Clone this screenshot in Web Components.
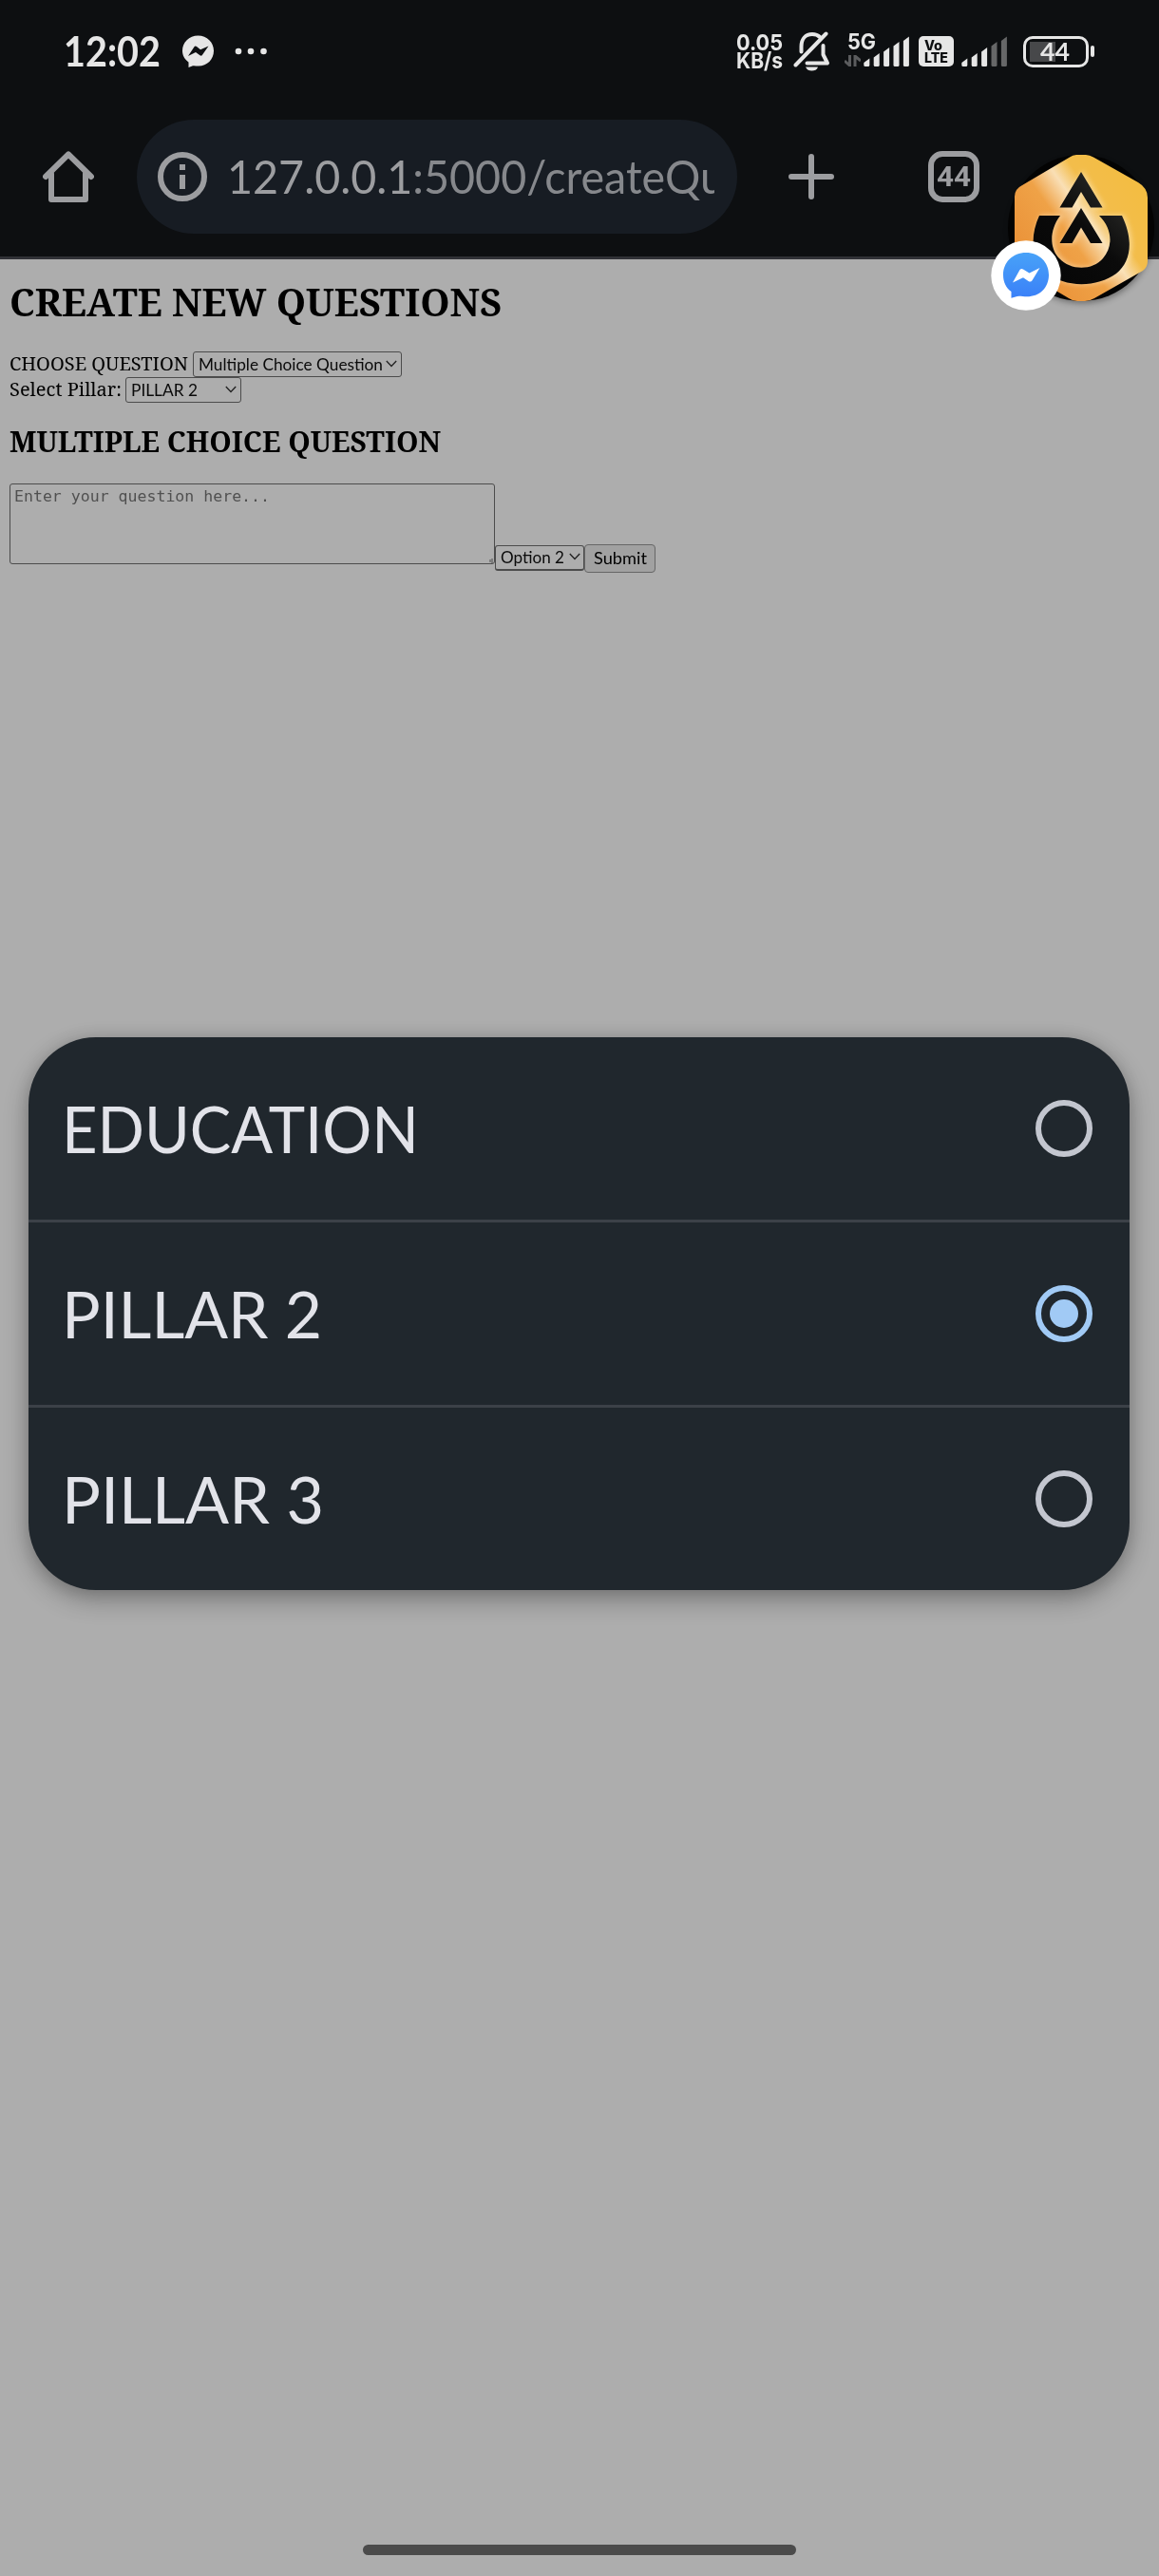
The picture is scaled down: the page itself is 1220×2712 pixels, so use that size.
<!DOCTYPE html>
<html lang="en">
<head>
<meta charset="utf-8">
<title>Create new questions</title>
<style>
html,body{margin:0;padding:0;background:#adadad}
body{width:1220px;height:2712px;overflow:hidden}
</style>
</head>
<body>
<phone-screen></phone-screen>
<script>
const define = (name, html, setup) => customElements.define(name, class extends HTMLElement {
  connectedCallback() {
    if (this.shadowRoot) return;
    this.attachShadow({ mode: 'open' }).innerHTML = html;
    if (setup) setup(this, this.shadowRoot);
  }
});

/* One line of text stretched to the width given by the "w" attribute. */
define('fit-text', `<style>
:host{display:inline-block;white-space:nowrap;flex:none;text-align:left}
span{display:inline-block;transform-origin:0 50%}
</style><span><slot></slot></span>`, (el, root) => {
  const span = root.querySelector('span');
  const w = +el.getAttribute('w');
  el.style.width = w + 'px';
  const fit = () => {
    const n = span.offsetWidth && span.getBoundingClientRect().width;
    if (n) span.style.transform = `scaleX(${w / n})`;
  };
  fit();
});

define('signal-bars', `<style>:host{display:block;width:50px;height:33px}svg{display:block}</style>
<svg width="50" height="33" viewBox="0 0 50 33" fill="#e6e6e6"></svg>`, (el, root) => {
  const lit = +el.getAttribute('lit');
  const tops = [23.5, 18, 12, 6, 0.5];
  root.querySelector('svg').innerHTML = tops.map((t, i) => {
    const x = i * 10.4 + 0.3;
    return `<path d="M${x} ${t + 4.5}L${x + 6} ${t}V30.5Q${x + 6} 32 ${x + 4.5} 32H${x + 1.5}Q${x} 32 ${x} 30.5Z" fill="${i < lit ? '#e6e6e6' : '#666768'}"/>`;
  }).join('');
});

define('status-bar', `<style>
:host{display:flex;height:108px;box-sizing:border-box;padding:0 68px 0 67px;justify-content:space-between;align-items:center;color:#e6e6e6;font-family:Lato,"Open Sans",sans-serif}
.l,.r{display:flex;align-items:center;height:34px}
svg{display:block;flex:none}
.time{font-size:43px;font-weight:700;line-height:34px}
.net{width:49px;font:700 23.500px/19px Inter,sans-serif;display:flex;flex-direction:column}
.sig{display:flex;position:relative;margin-left:14px;width:63px;padding-left:20px;height:34px;align-items:flex-end;box-sizing:content-box}
.g{position:absolute;left:3px;top:-2px;font:700 23px/18px Inter,sans-serif}
.ar{position:absolute;left:0;top:21px}
.vo{margin-left:-5px;width:37px;height:32px;border-radius:5px;background:#e6e6e6;color:#0d0f11;font:800 14px/13px Inter,sans-serif;display:flex;flex-direction:column;align-items:flex-start;padding:3px 6px;box-sizing:border-box}
.bat{margin-left:15px;width:69px;height:33px;box-sizing:border-box;border:3px solid #e6e6e6;border-radius:10px;padding:3px 4px;display:flex;align-items:center;background:linear-gradient(#47484a,#47484a) 4px 3px/27px 21px no-repeat}
.bat fit-text{margin-left:11px;font:700 26px/21px Lato,sans-serif}
.nub{margin-left:2px;width:4px;height:12px;border-radius:2px;background:#e6e6e6}
</style>
<div class="l"><fit-text class="time" w="102">12:02</fit-text>
<svg style="margin-left:23px" width="33" height="34" viewBox="0 0 33 34"><path d="M16.5 0.5C26 .5 33 7.500 33 16.500S26 32.500 17 32.500C14.500 32.500 12.500 32 11 32.300L6.500 34V28.500C2.500 25.500 0 21.500 0 16.500C0 7.500 7 .5 16.500 .5Z" fill="#e6e6e6"/><path d="M6 22L12.500 12.200Q13.500 11 15 12L19 15.200L27.500 11.500L21 20.800Q20 22.300 18.500 21.200L14 18Z" fill="#0d0f11"/></svg>
<svg style="margin-left:22px" width="34" height="8" viewBox="0 0 34 8" fill="#e6e6e6"><circle cx="4" cy="4" r="3.300"/><circle cx="17" cy="4" r="3.300"/><circle cx="30.500" cy="4" r="3.300"/></svg></div>
<div class="r">
<div class="net"><fit-text w="49">0.05</fit-text><fit-text w="49">KB/s</fit-text></div>
<svg style="margin-left:11px" width="40" height="42" viewBox="0 0 40 42" fill="none" stroke="#e6e6e6" stroke-width="4" stroke-linecap="round" stroke-linejoin="round"><path d="M8.500 21.500V16C8.500 8 13 3 20 3C23.500 3 26 4 28 6"/><path d="M2.500 35.500L34.500 2.500"/><path d="M31.500 15V24.500L36 33.500H14.500"/><path d="M13 37.500H26C25 40.500 22.500 41.500 19.500 41.500S14.500 40.500 13 37.500Z" fill="#e6e6e6" stroke="none"/></svg>
<div class="sig"><fit-text class="g" w="30">5G</fit-text><svg class="ar" width="17" height="12" viewBox="0 0 17 12" fill="none" stroke="#5b5c5e" stroke-width="3"><path d="M0 6L5.500 11V0M11 12V1L17 6"/></svg><signal-bars lit="5"></signal-bars></div>
<div class="vo"><fit-text w="19">Vo</fit-text><fit-text w="25">LTE</fit-text></div>
<signal-bars lit="3" style="margin-left:8px"></signal-bars>
<div class="bat"><fit-text w="31">44</fit-text></div><div class="nub"></div>
</div>`);

define('browser-bar', `<style>
:host{display:flex;height:165px;box-sizing:border-box;border-bottom:3px solid #303136;padding:18px 0 24px 45px;font-family:Lato,sans-serif;align-items:flex-start}
svg{display:block;flex:none}
.home{margin-top:33px}
.pill{margin-left:45px;width:632px;height:120px;border-radius:60px;background:#171c23;box-sizing:border-box;padding-left:22px;display:flex;align-items:center;color:#86888c}
.url{margin-left:21px;width:513px;overflow:hidden;font-size:48px;line-height:60px;white-space:nowrap}
b{font-weight:400;color:#9c9da0}
.plus{margin:36px 0 0 54px}
.tabs{margin:33px 0 0 99px;width:54px;height:54px;border:6px solid #9c9da0;border-radius:15px;box-sizing:border-box;display:flex;align-items:center;justify-content:center;color:#9c9da0;font:700 29px/30px Roboto,sans-serif}
</style>
<svg class="home" width="54" height="54" viewBox="0 0 54 54" fill="none" stroke="#9c9da0" stroke-width="6" stroke-linecap="round" stroke-linejoin="round"><path d="M3 27L27 3.500L51 27"/><path d="M9 24V51H45V24"/></svg>
<div class="pill"><svg width="52" height="52" viewBox="0 0 52 52"><circle cx="26" cy="26" r="23" fill="none" stroke="#9c9da0" stroke-width="6"/><path d="M23 13H29V19H23ZM23 24H29V39H23Z" fill="#9c9da0"/></svg>
<div class="url"><fit-text w="524"><b>127.0.0.1</b>:5000/createQu</fit-text></div></div>
<svg class="plus" width="48" height="48" viewBox="0 0 48 48" stroke="#9c9da0" stroke-width="6" stroke-linecap="round"><path d="M24 3V45M3 24H45"/></svg>
<div class="tabs"><fit-text w="36">44</fit-text></div>`);

define('drop-down', `<style>
:host{display:inline-flex;box-sizing:border-box;height:27px;border:1.4px solid #4c4c4c;border-radius:3px;align-items:center;justify-content:space-between;padding:0 4px 0 5px;font:17.500px/24px Lato,sans-serif;color:#0a0a0a;flex:none}
svg{display:block;margin-top:-2px}
</style><slot></slot><svg width="12" height="8" viewBox="0 0 12 8" fill="none" stroke="#222" stroke-width="1.300"><path d="M.8 1L6 6.500L11.200 1"/></svg>`);

define('question-form', `<style>
:host{display:flex;flex-direction:column;align-items:flex-start;height:2439px;box-sizing:border-box;padding:20px 10px 0;background:#adadad;color:#000;font-family:"Noto Serif","Droid Serif","DejaVu Serif Condensed","DejaVu Serif",serif}
h1,h2{margin:0;font-weight:700;white-space:nowrap}
h1{font-size:39px;line-height:50px}
h2{font-size:30px;line-height:40px;margin-top:21px}
.row{display:flex;height:27px;align-items:center;font-size:20px;line-height:24px}
.row>fit-text{padding-bottom:2px}
.area{width:511px;height:85px;box-sizing:border-box;border:1.400px solid #4c4c4c;border-radius:3px;padding:3px 4px;font:16.500px/20px "DejaVu Sans Mono",monospace;color:#505050;position:relative}
.area svg{position:absolute;right:0;bottom:0}
.ask{display:flex;align-items:flex-end;margin-top:24px;height:94px}
.btn{width:75px;height:30px;box-sizing:border-box;border:1.500px solid #666;border-radius:4px;background:#a1a1a1;display:flex;align-items:center;justify-content:center;font:17.500px/24px Lato,sans-serif}
</style>
<h1><fit-text w="518">CREATE NEW QUESTIONS</fit-text></h1>
<div class="row" style="margin-top:27px"><fit-text w="188">CHOOSE QUESTION</fit-text><drop-down style="width:220px;margin-left:5px"><fit-text w="194">Multiple Choice Question</fit-text></drop-down></div>
<div class="row"><fit-text w="118">Select Pillar:</fit-text><drop-down style="width:122px;margin-left:4px"><fit-text w="70">PILLAR 2</fit-text></drop-down></div>
<h2><fit-text w="454">MULTIPLE CHOICE QUESTION</fit-text></h2>
<div class="ask"><div class="area" style="align-self:flex-start"><fit-text w="269">Enter your question here...</fit-text><svg width="5" height="5" stroke="#4c4c4c"><path d="M1 1V4M3 0V5"/></svg></div>
<drop-down style="width:94px;margin-bottom:2px;border-bottom-width:2px;padding:0 3px 0 5px"><fit-text w="67">Option 2</fit-text></drop-down>
<div class="btn"><fit-text w="56">Submit</fit-text></div></div>`);

define('radio-row', `<style>
:host{display:flex;height:192px;align-items:center;justify-content:space-between;padding:0 39px 0 35px}
:host(:not(:first-child)){border-top:3px solid #3c4148}
fit-text{font:400 68px/80px Lato,sans-serif;color:#e2e3e9}
svg{display:block}
</style><fit-text><slot></slot></fit-text><svg width="60" height="60" viewBox="0 0 60 60"></svg>`, (el, root) => {
  const on = el.hasAttribute('checked'), c = on ? '#a1caf5' : '#c3c6cf';
  root.querySelector('svg').innerHTML = `<circle cx="30" cy="30" r="27" fill="none" stroke="${c}" stroke-width="6"/>` + (on ? `<circle cx="30" cy="30" r="15" fill="${c}"/>` : '');
  const f = root.querySelector('fit-text'), s = f.shadowRoot.querySelector('span'), w = +el.getAttribute('w');
  f.style.width = w + 'px';
  s.style.transform = 'none';
  s.style.transform = `scaleX(${w / s.getBoundingClientRect().width})`;
});

define('choice-dialog', `<style>
:host{display:flex;flex-direction:column;width:1159px;height:582px;border-radius:71px;background:#20272d;box-shadow:0 10px 26px rgba(0,0,0,.3),0 0 16px rgba(0,0,0,.1);overflow:hidden}
</style><slot></slot>`);

define('chat-head', `<style>:host{display:block}svg{display:block;overflow:visible}</style>
<svg width="190" height="180" viewBox="1030 150 190 180">
<defs>
<linearGradient id="g" x1="1068" y1="283" x2="1198" y2="192" gradientUnits="userSpaceOnUse"><stop offset="0" stop-color="#e98e35"/><stop offset=".42" stop-color="#efa247"/><stop offset=".58" stop-color="#f9dfb5"/><stop offset=".7" stop-color="#f3bd4b"/><stop offset="1" stop-color="#f3bd42"/></linearGradient>
<linearGradient id="o" x1="1090" y1="300" x2="1200" y2="190" gradientUnits="userSpaceOnUse"><stop offset="0" stop-color="#050505"/><stop offset=".5" stop-color="#0b0b0b"/><stop offset="1" stop-color="#383834"/></linearGradient>
<linearGradient id="s" x1="0" y1="0" x2="0" y2="1"><stop offset="0" stop-color="#48a2f8"/><stop offset="1" stop-color="#3a80f8"/></linearGradient>
<filter id="b" x="-20%" y="-20%" width="140%" height="140%"><feGaussianBlur stdDeviation="3.500"/></filter>
<filter id="c" x="-20%" y="-20%" width="140%" height="140%"><feGaussianBlur stdDeviation="2.500"/></filter>
<path id="m" d="M1138 181L1160.500 218.500H1148L1138 202L1128.500 218.500H1115.500ZM1138 219L1160.500 256H1148L1138 239.500L1128.500 256H1115.500ZM1094 227H1116C1104 243 1105 262 1115 272C1127 285 1150 285 1161 272C1172 259 1171 241 1157 227H1181C1194 254 1190 276 1175 288C1155 303 1120 303 1102 287C1085 272 1084 249 1094 227Z"/>
</defs>
<circle cx="1139" cy="243" r="76" fill="#000" opacity=".4" filter="url(#b)"/>
<circle cx="1138" cy="240" r="77" fill="#030303"/>
<path d="M1133 163H1143Q1147 163 1151 165.500L1198 192Q1208 198 1208 208V275Q1208 281 1203 285L1152 314Q1147 317 1142 317H1134Q1129 317 1125 314L1076 285Q1068 280 1068 273V207Q1068 199 1076 195L1126 165.500Q1129 163 1133 163Z" fill="url(#g)"/>
<use href="#m" fill="#fff0cf" stroke="#fff0cf" stroke-width="2" opacity=".45" filter="url(#c)" transform="translate(2 0)"/>
<use href="#m" fill="url(#o)"/>
<circle cx="1080" cy="290" r="36.700" fill="#fff"/>
<path d="M1080 266C1094 266 1104 276 1104 289.500S1094 312.300 1081 312.300C1076 312.300 1072 311 1069 312.500L1064.500 313.700V307C1059 303 1056 297 1056 289.500C1056 276 1066 266 1080 266Z" fill="url(#s)"/>
<path d="M1066 297.500L1073.500 284Q1075 282.500 1077 283.500L1083.500 287.500L1094.500 282L1086.500 295.300Q1085 297.500 1082.500 296L1077 292.300Z" fill="#fff"/>
</svg>`);

define('phone-screen', `<style>
:host{display:block;position:relative;width:1220px;height:2712px;overflow:hidden}
.top{background:#0d0f11}
choice-dialog{position:absolute;left:30px;top:1092px}
chat-head{position:absolute;left:1030px;top:150px}
.nav{position:absolute;left:382px;top:2679px;width:456px;height:11px;border-radius:6px;background:#4b4b4b}
</style>
<div class="top"><status-bar></status-bar><browser-bar></browser-bar></div>
<question-form></question-form>
<choice-dialog><radio-row w="376">EDUCATION</radio-row><radio-row w="274" checked>PILLAR 2</radio-row><radio-row w="276">PILLAR 3</radio-row></choice-dialog>
<chat-head></chat-head><div class="nav"></div>`);
</script>
</body>
</html>
